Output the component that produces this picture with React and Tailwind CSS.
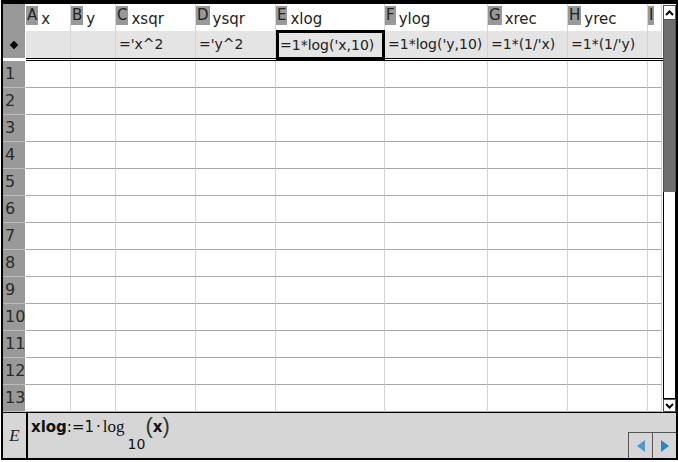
import React from 'react';

const cols = [
  { key: 'A', name: 'x', w: 45, f: '' },
  { key: 'B', name: 'y', w: 45, f: '' },
  { key: 'C', name: 'xsqr', w: 80, f: "='x^2" },
  { key: 'D', name: 'ysqr', w: 80, f: "='y^2" },
  { key: 'E', name: 'xlog', w: 109, f: "=1*log('x,10)" },
  { key: 'F', name: 'ylog', w: 103, f: "=1*log('y,10)" },
  { key: 'G', name: 'xrec', w: 80, f: "=1*(1/'x)" },
  { key: 'H', name: 'yrec', w: 80, f: "=1*(1/'y)" },
  { key: 'I', name: '', w: 14, f: '' },
];

const rows = [1, 2, 3, 4, 5, 6, 7, 8, 9, 10, 11, 12, 13];

const font = { fontFamily: '"DejaVu Sans", "Liberation Sans", sans-serif' };

const HeaderRow = () => (
  <div className="flex h-[27px]">
    <div className="w-[23px] bg-[#999999] border-r border-white" />
    {cols.map((c) => (
      <div
        key={c.key}
        className="flex items-start border-r border-[#d4d4d4] bg-white overflow-hidden"
        style={{ width: c.w }}
      >
        <div className="mt-[2px] h-[19px] px-[1px] bg-[#999999] text-[#222] text-[15px] leading-[19px]">
          {c.key}
        </div>
        <div className="ml-[3px] mt-[6px] text-[15px] leading-[19px] text-[#222] whitespace-nowrap">{c.name}</div>
      </div>
    ))}
  </div>
);

const FormulaRow = () => (
  <div className="flex h-[27px]">
    <div className="w-[23px] bg-[#999999] border-r border-white flex items-center justify-center">
      <div className="w-[6px] h-[6px] bg-black rotate-45" />
    </div>
    {cols.map((c) => (
      <div
        key={c.key}
        className={
          c.key === 'E'
            ? 'h-[30px] -mt-[1px] border-[3px] border-black bg-[#e4e4e4] text-[14px] leading-[24px] pl-[1px] text-[#222] whitespace-nowrap overflow-hidden relative z-10'
            : 'border-r border-[#d4d4d4] bg-[#e4e4e4] text-[14px] leading-[27px] pl-[3px] text-[#222] whitespace-nowrap overflow-hidden'
        }
        style={{ width: c.w }}
      >
        {c.f}
      </div>
    ))}
  </div>
);

const DataRow = ({ n }) => (
  <div className="flex h-[27px]">
    <div className="w-[23px] bg-[#999999] border-r border-white border-b border-b-[#bdbdbd] text-[16px] leading-[26px] pl-[2px] text-[#2a2a2a]">
      {n}
    </div>
    {cols.map((c) => (
      <div
        key={c.key}
        className="border-r border-r-[#d4d4d4] border-b border-b-[#a8a8a8] bg-white"
        style={{ width: c.w }}
      />
    ))}
  </div>
);

const Scrollbar = () => (
  <div className="w-[13px] flex flex-col bg-white">
    <div className="h-[15px] mt-[1px] border border-[#555] flex items-center justify-center">
      <svg width="9" height="6" viewBox="0 0 9 6">
        <path d="M1 5 L4.5 1.5 L8 5" stroke="black" strokeWidth="2" fill="none" />
      </svg>
    </div>
    <div className="h-[172px] bg-[#6e6e6e] border-x border-[#555]" />
    <div className="flex-1 border border-t-0 border-black bg-white" />
    <div className="h-[13px] border border-[#555] flex items-center justify-center">
      <svg width="9" height="6" viewBox="0 0 9 6">
        <path d="M1 1 L4.5 4.5 L8 1" stroke="black" strokeWidth="2" fill="none" />
      </svg>
    </div>
  </div>
);

export default function App() {
  return (
    <div className="w-[678px] h-[462px] bg-white pl-[1px] pb-[2px]" style={font}>
      <div className="h-full border-t-4 border-l-2 border-r-2 border-b-2 border-black flex flex-col">
        <div className="flex h-[408px]">
          <div className="w-[660px] flex flex-col">
            <HeaderRow />
            <FormulaRow />
            <div className="flex h-[3px]">
              <div className="w-[23px] bg-white" />
              <div className="flex-1 border-y border-black bg-white" />
            </div>
            {rows.map((n) => (
              <DataRow key={n} n={n} />
            ))}
          </div>
          <Scrollbar />
        </div>
        <div className="h-px bg-black" />
        <div className="flex-1 flex bg-[#d6d6d6]">
          <div className="w-[25px] border-r-2 border-black flex items-center justify-center">
            <span className="italic text-[17px] text-[#222]" style={{ fontFamily: '"Liberation Serif", serif' }}>E</span>
          </div>
          <div className="flex-1 relative">
            <div className="absolute left-[3px] top-[3px] flex items-start text-[15px] text-[#111]">
              <span className="font-bold leading-[22px]">xlog</span>
              <span className="leading-[22px]">:=1</span>
              <span className="leading-[22px] mx-[2px]">·</span>
              <span className="leading-[22px]" style={{ fontFamily: '"Liberation Serif", serif', fontSize: 17 }}>log</span>
              <span className="mt-[17px] ml-[3px] text-[14px] leading-[22px]">10</span>
              <span className="leading-[22px] text-[22px] -mt-[1px] text-[#333]" style={{ fontFamily: '"Liberation Sans", sans-serif' }}>(</span>
              <span className="leading-[22px] font-bold">x</span>
              <span className="leading-[22px] text-[22px] -mt-[1px] text-[#333]" style={{ fontFamily: '"Liberation Sans", sans-serif' }}>)</span>
            </div>
            <div className="absolute right-0 bottom-0 flex h-[26px]">
              <div className="w-[24px] border-l border-t border-[#555] flex items-center justify-center">
                <svg width="8" height="12" viewBox="0 0 8 12"><path d="M8 0 L0 6 L8 12 Z" fill="#4a9ccc" /></svg>
              </div>
              <div className="w-[24px] border-l border-t border-[#555] flex items-center justify-center">
                <svg width="8" height="12" viewBox="0 0 8 12"><path d="M0 0 L8 6 L0 12 Z" fill="#2a86c4" /></svg>
              </div>
            </div>
          </div>
        </div>
      </div>
    </div>
  );
}
